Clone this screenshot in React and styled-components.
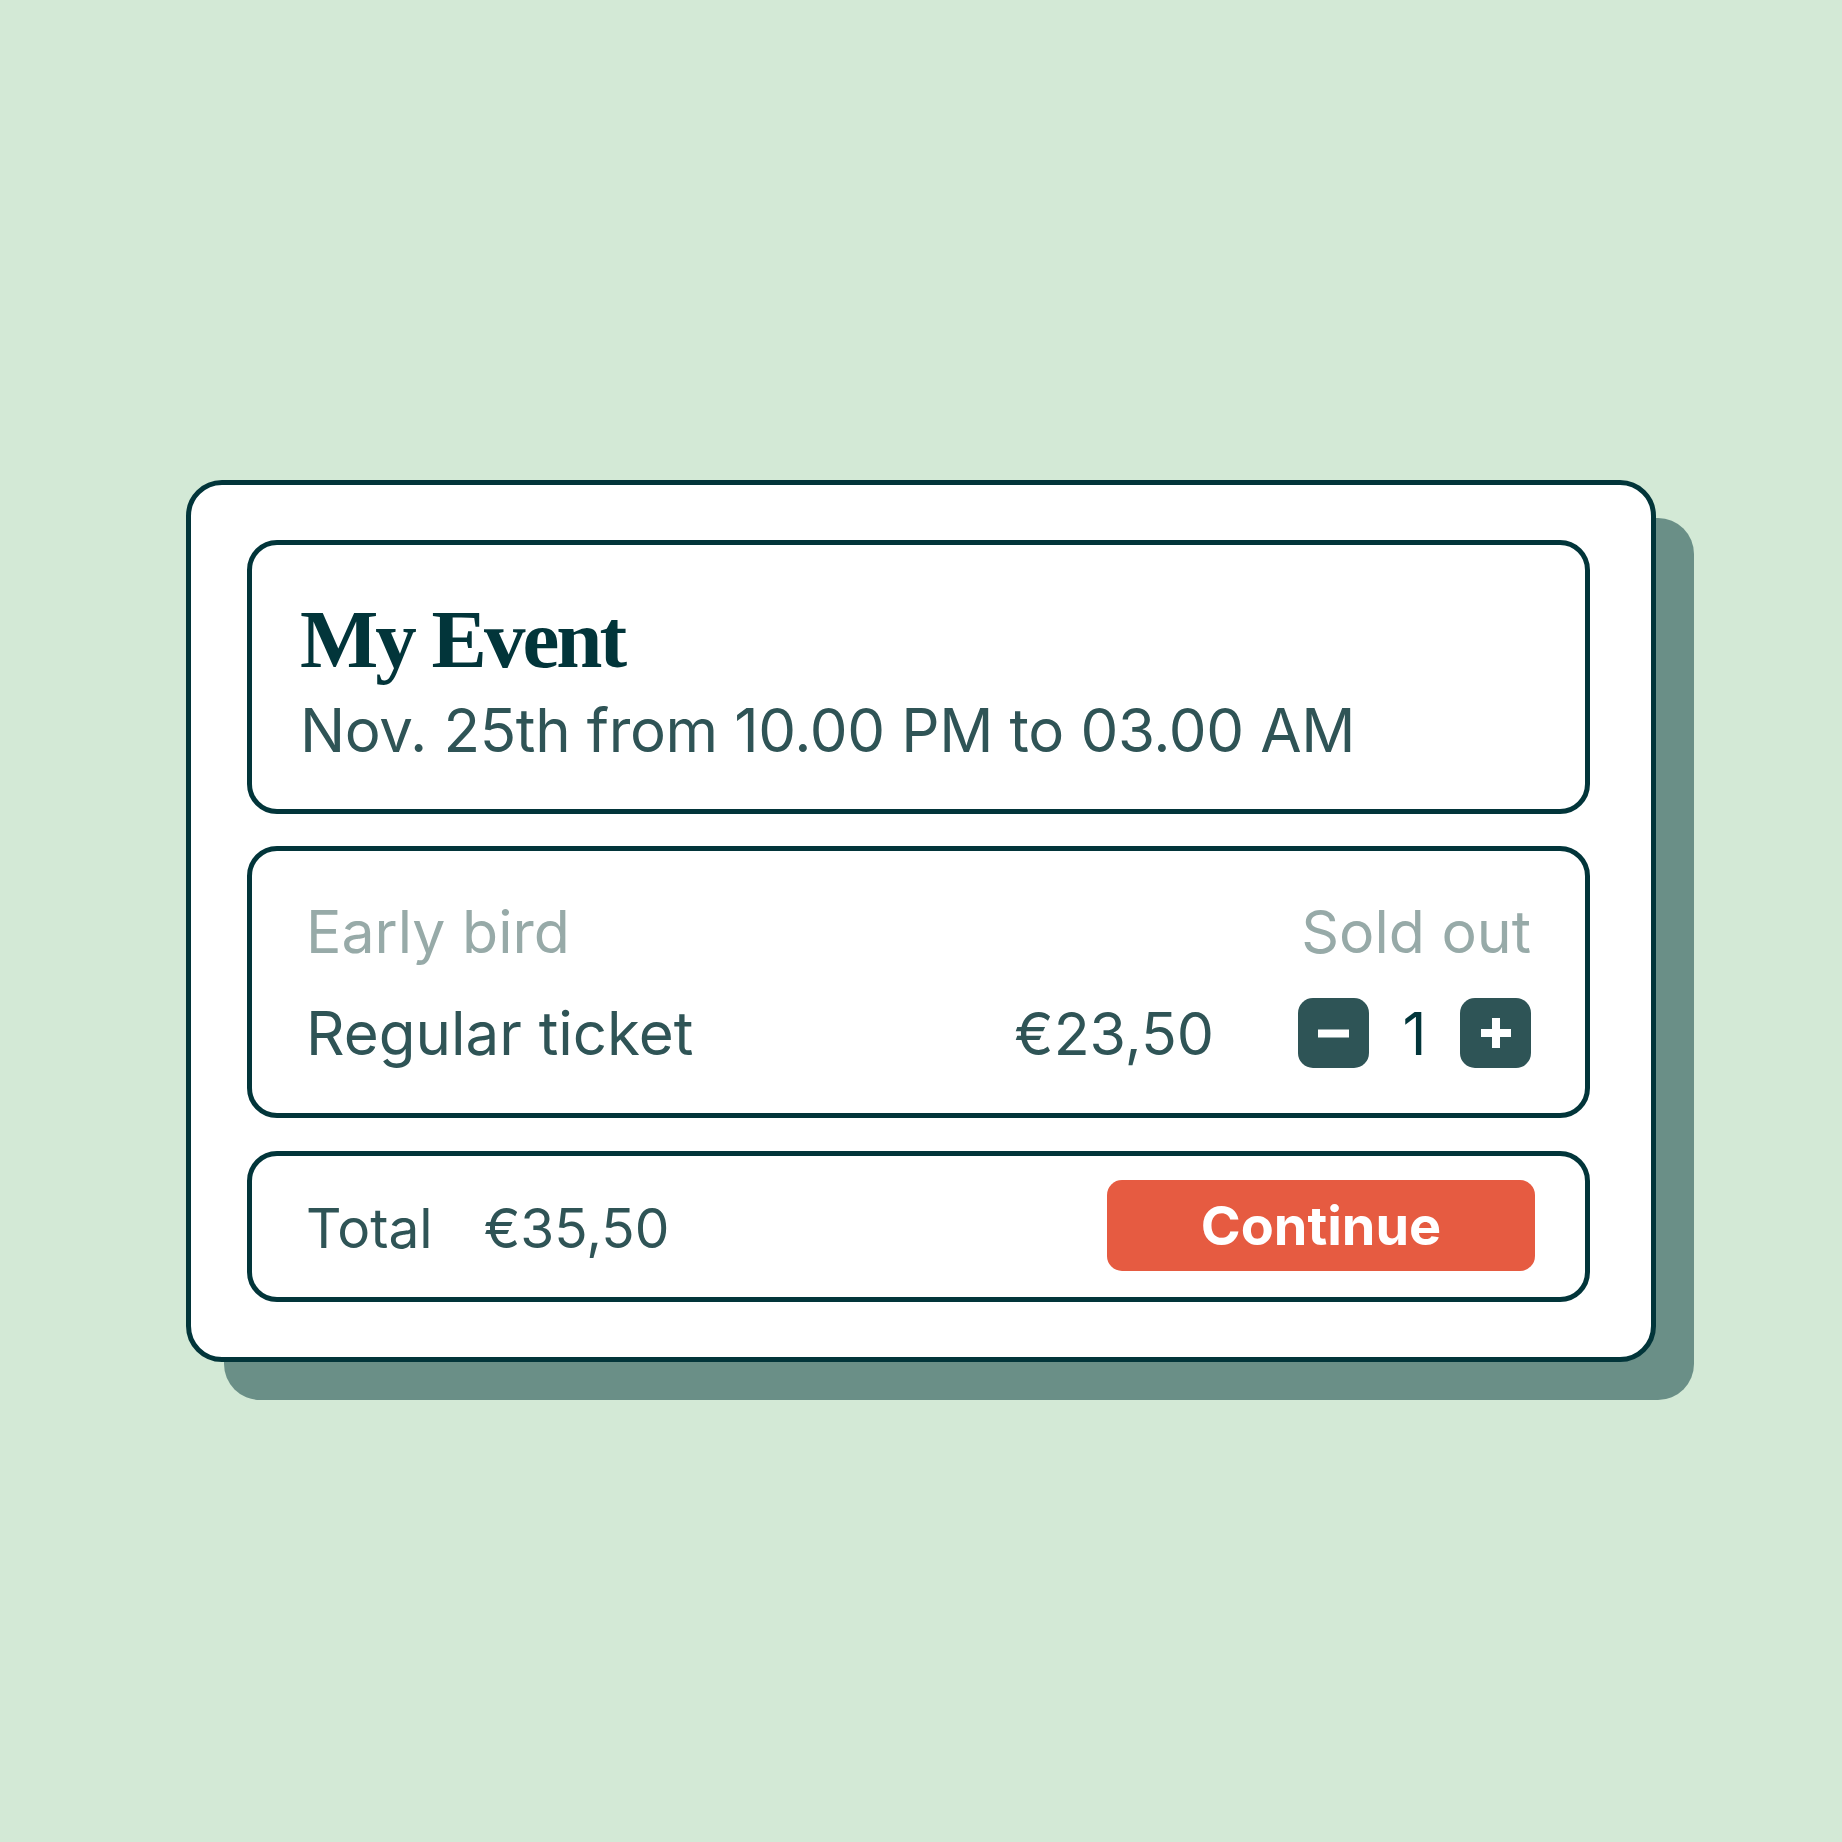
import React from "react";
import styled, { createGlobalStyle } from "styled-components";

const Global = createGlobalStyle`
  html, body { margin: 0; padding: 0; background: #d3e9d6; }
  * { box-sizing: border-box; }
`;

const Page = styled.div`
  width: 1842px;
  height: 1842px;
  display: flex;
  align-items: center;
  justify-content: center;
  background: #d3e9d6;
  font-family: Inter, "Noto Sans", sans-serif;
`;

const Card = styled.div`
  width: 1470px;
  background: #ffffff;
  border: 5px solid #02353a;
  border-radius: 36px;
  box-shadow: 38px 38px 0 0 #6a8f87;
  padding: 55px 61px 55px 56px;
  display: flex;
  flex-direction: column;
`;

const Section = styled.section`
  border: 5px solid #02353a;
  border-radius: 30px;
  background: #ffffff;
  display: flex;
  flex-direction: column;
  margin-top: ${(p) => p.$mt || 0}px;
  padding: ${(p) => p.$pad};
`;

const Title = styled.h1`
  margin: 0;
  font-family: "Liberation Serif", "DejaVu Serif", serif;
  font-weight: 700;
  font-size: 83px;
  line-height: 83px;
  letter-spacing: -3px;
  color: #02353a;
`;

const DateLine = styled.div`
  margin-top: 19px;
  font-size: 60px;
  line-height: 60px;
  letter-spacing: -0.35px;
  font-weight: 400;
  color: #2f5456;
`;

const Row = styled.div`
  display: flex;
  align-items: center;
  margin-top: ${(p) => p.$mt || 0}px;
`;

const Label = styled.span`
  font-size: ${(p) => p.$size || 60}px;
  line-height: ${(p) => p.$size || 60}px;
  color: ${(p) => (p.$muted ? "#97aaa8" : "#2f5456")};
  margin-left: ${(p) => (p.$auto ? "auto" : "0")};
`;

const Price = styled.span`
  margin-left: auto;
  margin-right: 84px;
  font-size: 59px;
  line-height: 59px;
  color: #2f5456;
`;

const Stepper = styled.div`
  display: flex;
  align-items: center;
`;

const StepButton = styled.button`
  width: 71px;
  height: 70px;
  border: none;
  border-radius: 15px;
  background: #2e5456;
  display: flex;
  align-items: center;
  justify-content: center;
  padding: 0;
  cursor: pointer;
`;

const Count = styled.span`
  width: 91px;
  text-align: center;
  font-size: 59px;
  line-height: 59px;
  color: #02353a;
`;

const TotalAmount = styled.span`
  margin-left: 51px;
  font-size: 55px;
  line-height: 55px;
  color: #2f5456;
`;

const TotalLabel = styled.span`
  font-size: 55px;
  line-height: 55px;
  color: #2f5456;
`;

const ContinueButton = styled.button`
  margin-left: auto;
  width: 428px;
  height: 91px;
  border: none;
  border-radius: 15px;
  background: #e65b41;
  color: #ffffff;
  font-family: Inter, "Noto Sans", sans-serif;
  font-weight: 700;
  font-size: 54px;
  line-height: 54px;
  padding: 0;
  cursor: pointer;
`;

const TotalGroup = styled.div`
  display: flex;
  align-items: center;
  padding-top: 6px;
`;

const Minus = () => (
  <svg width="31" height="31" viewBox="0 0 31 31">
    <rect x="0" y="11.5" width="31" height="8" fill="#ffffff" />
  </svg>
);

const Plus = () => (
  <svg width="30" height="30" viewBox="0 0 30 30">
    <rect x="0" y="11" width="30" height="8" fill="#ffffff" />
    <rect x="11" y="0" width="8" height="30" fill="#ffffff" />
  </svg>
);

export default function App() {
  return (
    <>
      <Global />
      <Page>
        <Card>
          <Section $pad="53px 46px 49px 48px">
            <Title>My Event</Title>
            <DateLine>Nov. 25th from 10.00 PM to 03.00 AM</DateLine>
          </Section>
          <Section $mt={32} $pad="51px 54px 45px 54px">
            <Row>
              <Label $muted $size={59}>Early bird</Label>
              <Label $muted $auto $size={59}>Sold out</Label>
            </Row>
            <Row $mt={37}>
              <Label>Regular ticket</Label>
              <Price>€23,50</Price>
              <Stepper>
                <StepButton aria-label="Decrease">
                  <Minus />
                </StepButton>
                <Count>1</Count>
                <StepButton aria-label="Increase">
                  <Plus />
                </StepButton>
              </Stepper>
            </Row>
          </Section>
          <Section $mt={33} $pad="24px 50px 26px 54px">
            <Row>
              <TotalGroup>
                <TotalLabel>Total</TotalLabel>
                <TotalAmount>€35,50</TotalAmount>
              </TotalGroup>
              <ContinueButton>Continue</ContinueButton>
            </Row>
          </Section>
        </Card>
      </Page>
    </>
  );
}
